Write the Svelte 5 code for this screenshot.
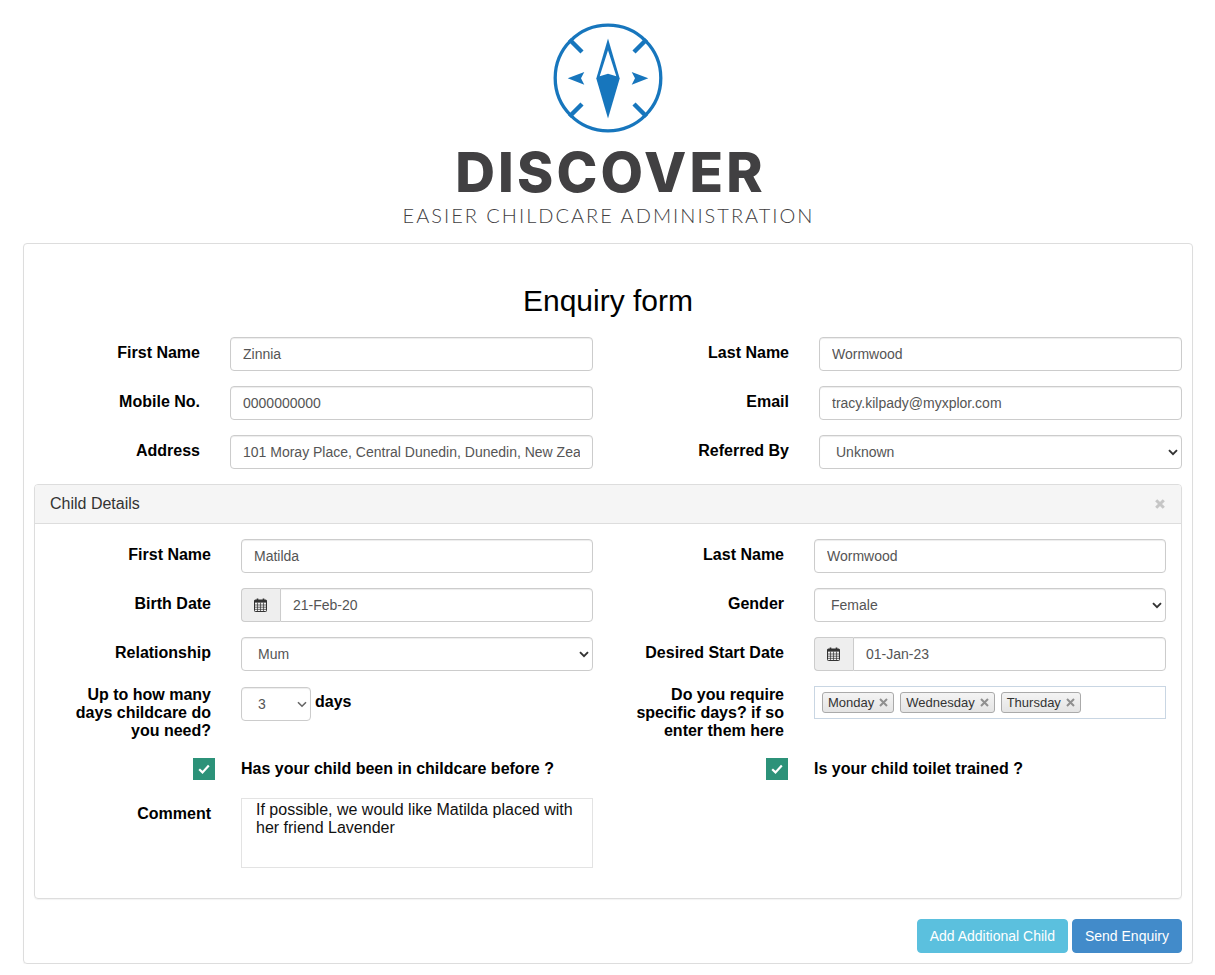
<script lang="ts">
  let relationship = $state("Mum");
  let days = $state("3");
  let hasBeenInCare = $state(true);
  let toiletTrained = $state(true);
  const selectedDays = ["Monday", "Wednesday", "Thursday"];
</script>

{#snippet chevron()}
  <svg class="chevron" viewBox="0 0 10 7" width="10" height="7" aria-hidden="true">
    <path d="M1 1.2 5 5.2 9 1.2" fill="none" stroke="#333" stroke-width="1.9" />
  </svg>
{/snippet}

{#snippet calendar()}
  <span class="addon">
    <svg viewBox="0 0 13 14" width="13" height="14" aria-hidden="true">
      <rect x="0.5" y="2" width="12" height="11.5" rx="0.8" fill="none" stroke="#333" />
      <rect x="0.5" y="2" width="12" height="2.6" fill="#333" />
      <path d="M3.5 0.5v3M9.5 0.5v3" stroke="#333" stroke-width="1.6" />
      <path d="M0.5 7h12M0.5 9.2h12M0.5 11.4h12M3.5 4.5v9M6.5 4.5v9M9.5 4.5v9" stroke="#333" stroke-width="0.7" />
    </svg>
  </span>
{/snippet}

{#snippet check()}
  <svg viewBox="0 0 12 10" width="12" height="10" aria-hidden="true">
    <path d="M1.2 5.2 4.5 8.4 10.8 1.6" fill="none" stroke="#fff" stroke-width="2.2" />
  </svg>
{/snippet}

<header class="brand">
  <svg class="mark" viewBox="-55 -55 110 110" width="110" height="110" role="img" aria-label="Discover logo">
    <circle r="52.8" fill="none" stroke="#1776bd" stroke-width="3.3" />
    <g stroke="#1776bd" stroke-width="4.4">
      <path d="M-38.5 -38.5-26 -26M38.5 -38.5 26 -26M-38.5 38.5-26 26M38.5 38.5 26 26" />
    </g>
    <path d="M0 -39.6 11.7 0.5 0 40.6-11.7 0.5Z" fill="#1776bd" />
    <path d="M0 -27.7 8.3 -1.7 0 -4.3-8.3 -1.7Z" fill="#fff" />
    <path d="M-40.3 0.3-23.7 -6-27 0.3-23.7 6.7Z" fill="#1776bd" />
    <path d="M40.3 0.3 23.7 -6 27 0.3 23.7 6.7Z" fill="#1776bd" />
  </svg>
  <div class="wordmark">DISCOVER</div>
  <div class="tagline">EASIER CHILDCARE ADMINISTRATION</div>
</header>

<main class="panel">
  <h3>Enquiry form</h3>

  <div class="grid top">
    <label for="first">First Name</label>
    <input id="first" value="Zinnia" />
    <label for="last">Last Name</label>
    <input id="last" value="Wormwood" />

    <label for="mobile">Mobile No.</label>
    <input id="mobile" value="0000000000" />
    <label for="email">Email</label>
    <input id="email" value="tracy.kilpady@myxplor.com" />

    <label for="address">Address</label>
    <input id="address" value="101 Moray Place, Central Dunedin, Dunedin, New Zealand" />
    <label for="referred">Referred By</label>
    <div class="select">
      <select id="referred"><option>Unknown</option></select>
      {@render chevron()}
    </div>
  </div>

  <section class="child">
    <div class="child-head">
      <span>Child Details</span>
      <svg viewBox="0 0 10 10" width="10" height="10" aria-hidden="true">
        <path d="M1.2 1.2 8.8 8.8M8.8 1.2 1.2 8.8" stroke="#c6c6c6" stroke-width="3" />
      </svg>
    </div>

    <div class="grid inner">
      <label for="c-first">First Name</label>
      <input id="c-first" value="Matilda" />
      <label for="c-last">Last Name</label>
      <input id="c-last" value="Wormwood" />

      <label for="birth">Birth Date</label>
      <div class="date">
        {@render calendar()}
        <input id="birth" value="21-Feb-20" />
      </div>
      <label for="gender">Gender</label>
      <div class="select">
        <select id="gender"><option>Female</option></select>
        {@render chevron()}
      </div>

      <label for="relationship">Relationship</label>
      <div class="select">
        <select id="relationship" bind:value={relationship}><option>Mum</option><option>Dad</option></select>
        {@render chevron()}
      </div>
      <label for="start">Desired Start Date</label>
      <div class="date">
        {@render calendar()}
        <input id="start" value="01-Jan-23" />
      </div>

      <label class="long" for="days">Up to how many days childcare do you need?</label>
      <div class="days">
        <div class="select small">
          <select id="days" bind:value={days}><option>1</option><option>2</option><option>3</option><option>4</option><option>5</option></select>
          <svg class="chevron" viewBox="0 0 10 7" width="10" height="7" aria-hidden="true">
            <path d="M1 1.2 5 5.2 9 1.2" fill="none" stroke="#666" stroke-width="1.6" />
          </svg>
        </div>
        <span>days</span>
      </div>
      <label class="long" for="tags">Do you require specific days? if so enter them here</label>
      <div class="tags" id="tags">
        {#each selectedDays as day}
          <span class="tag">
            {day}
            <svg viewBox="0 0 9 9" width="9" height="9" aria-hidden="true">
              <path d="M1 1 8 8M8 1 1 8" stroke="#8f8f8f" stroke-width="2" />
            </svg>
          </span>
        {/each}
      </div>

      <div class="tick-cell">
        <button class="tick" class:off={!hasBeenInCare} type="button" aria-label="Has your child been in childcare before" onclick={() => (hasBeenInCare = !hasBeenInCare)}>
          {#if hasBeenInCare}{@render check()}{/if}
        </button>
      </div>
      <div class="tick-label">Has your child been in childcare before ?</div>
      <div class="tick-cell">
        <button class="tick" class:off={!toiletTrained} type="button" aria-label="Is your child toilet trained" onclick={() => (toiletTrained = !toiletTrained)}>
          {#if toiletTrained}{@render check()}{/if}
        </button>
      </div>
      <div class="tick-label">Is your child toilet trained ?</div>

      <label for="comment">Comment</label>
      <textarea id="comment" value="If possible, we would like Matilda placed with her friend Lavender"></textarea>
    </div>
  </section>

  <div class="actions">
    <button class="btn info" type="button">Add Additional Child</button>
    <button class="btn primary" type="button">Send Enquiry</button>
  </div>
</main>

<style>
  :global(body) {
    background: #fff;
    font-family: "Liberation Sans", Arial, sans-serif;
  }

  .brand {
    height: 243px;
    padding-top: 23px;
    box-sizing: border-box;
    display: flex;
    flex-direction: column;
    align-items: center;
    color: #414042;
  }

  .mark {
    display: block;
    margin-right: -1px;
  }

  .wordmark {
    font-family: Inter, sans-serif;
    font-weight: 800;
    font-size: 55px;
    line-height: 40px;
    letter-spacing: 3.2px;
    margin-top: 19px;
    padding-left: 6px;
  }

  .tagline {
    font-family: Lato, sans-serif;
    font-weight: 300;
    font-size: 20px;
    line-height: 16px;
    letter-spacing: 2px;
    margin-top: 15px;
    padding-left: 2px;
  }

  .panel {
    width: 1170px;
    margin: 0 0 0 23px;
    box-sizing: border-box;
    padding: 10px;
    border: 1px solid #ddd;
    border-radius: 4px;
    box-shadow: 0 1px 1px rgba(0, 0, 0, 0.05);
  }

  h3 {
    font-size: 30px;
    font-weight: 400;
    line-height: 33px;
    color: #000;
    text-align: center;
    margin: 30px 0 20px;
  }

  .grid {
    display: grid;
    column-gap: 30px;
    row-gap: 15px;
    align-items: start;
  }

  .top {
    grid-template-columns: 166px 363px 166px 363px;
  }

  .inner {
    grid-template-columns: 161px 352px 161px 352px;
    padding: 15px 15px 30px;
  }

  label {
    display: block;
    padding-top: 7px;
    font-size: 16px;
    line-height: 18px;
    font-weight: 700;
    color: #000;
    text-align: right;
  }

  label.long {
    padding-top: 0;
  }

  input,
  select {
    display: block;
    width: 100%;
    height: 34px;
    box-sizing: border-box;
    padding: 0 12px;
    border: 1px solid #ccc;
    border-radius: 4px;
    background: #fff;
    box-shadow: inset 0 1px 1px rgba(0, 0, 0, 0.075);
    font-family: inherit;
    font-size: 14px;
    color: #555;
  }

  select {
    appearance: none;
    padding: 0 16px;
  }

  .select {
    position: relative;
  }

  .chevron {
    position: absolute;
    right: 4px;
    top: 14px;
  }

  .small {
    width: 70px;
  }

  .date {
    display: flex;
  }

  .date input {
    flex: 1;
    border-radius: 0 4px 4px 0;
  }

  .addon {
    display: flex;
    align-items: center;
    justify-content: center;
    width: 39px;
    height: 34px;
    box-sizing: border-box;
    padding-right: 2px;
    background: #eee;
    border: 1px solid #ccc;
    border-right-width: 0;
    border-radius: 4px 0 0 4px;
  }

  .child {
    margin-top: 15px;
    border: 1px solid #ddd;
    border-radius: 4px;
    box-shadow: 0 1px 1px rgba(0, 0, 0, 0.05);
  }

  .child-head {
    display: flex;
    align-items: center;
    justify-content: space-between;
    height: 38px;
    padding: 0 16px 0 15px;
    background: #f5f5f5;
    border-bottom: 1px solid #ddd;
    border-radius: 3px 3px 0 0;
    font-size: 16px;
    color: #333;
  }

  .days {
    display: flex;
    gap: 4px;
    padding-top: 1px;
    font-size: 16px;
    font-weight: 700;
    line-height: 18px;
    color: #000;
  }

  .days span {
    padding-top: 6px;
  }

  .tags {
    display: flex;
    gap: 6px;
    height: 33px;
    box-sizing: border-box;
    padding: 5px 7px;
    border: 1px solid #c9d6e3;
  }

  .tag {
    display: flex;
    align-items: center;
    gap: 5px;
    height: 21px;
    box-sizing: border-box;
    padding: 0 5px;
    border: 1px solid #aaa;
    border-radius: 3px;
    background: linear-gradient(#f4f4f4, #e4e4e4);
    font-size: 13px;
    color: #333;
  }

  .tick-cell {
    display: flex;
    justify-content: flex-end;
    margin-right: -4px;
    padding-top: 3px;
    height: 25px;
  }

  .tick {
    display: flex;
    align-items: center;
    justify-content: center;
    width: 22px;
    height: 22px;
    padding: 0;
    border: 0;
    background: #2c9279;
  }

  .tick.off {
    background: #fff;
    border: 1px solid #ccc;
  }

  .tick-label {
    padding-top: 5px;
    font-size: 16px;
    line-height: 18px;
    font-weight: 700;
    color: #000;
  }

  textarea {
    display: block;
    width: 100%;
    height: 70px;
    box-sizing: border-box;
    padding: 2px 14px;
    border: 1px solid #e3e3e3;
    border-radius: 0;
    outline: none;
    resize: none;
    font-family: inherit;
    font-size: 16px;
    line-height: 18px;
    color: #111;
  }

  .actions {
    display: flex;
    justify-content: flex-end;
    gap: 4px;
    margin-top: 20px;
  }

  .btn {
    height: 34px;
    padding: 0 12px;
    border: 1px solid transparent;
    border-radius: 4px;
    font-family: inherit;
    font-size: 14px;
    color: #fff;
  }

  .info {
    background: #5bc0de;
    border-color: #5bc0de;
  }

  .primary {
    background: #428bca;
    border-color: #428bca;
  }
</style>
